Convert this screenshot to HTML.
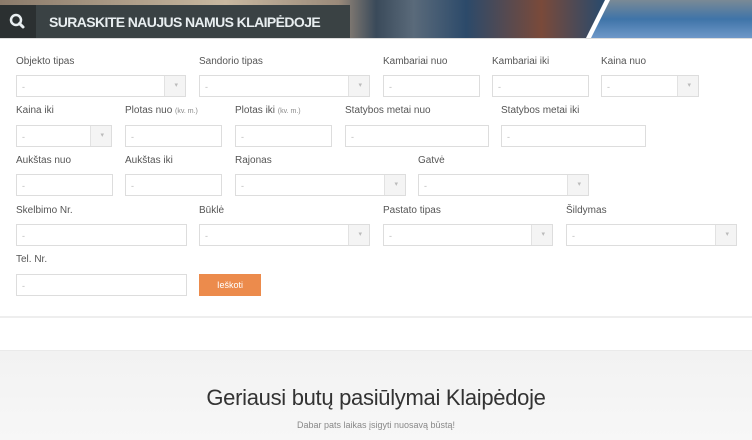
<!DOCTYPE html>
<html><head><meta charset="utf-8"><style>
*{margin:0;padding:0;box-sizing:border-box}
body{width:752px;height:440px;overflow:hidden;background:#fff;font-family:"Liberation Sans",sans-serif;position:relative}
.banner{position:absolute;left:0;top:0;width:752px;height:38px;background:linear-gradient(90deg,#8a7a6a 0%,#c8b8a0 30%,#9a8a7a 45%,#3a4a5a 50%,#5a6a7a 55%,#2c4a6a 62%,#7a4a3a 72%,#2c4a6a 80%)}
.water{position:absolute;left:0;top:0;width:752px;height:38px;background:linear-gradient(180deg,#7a8a95 0%,#3f74a8 50%,#6f98c8 100%);clip-path:polygon(609px 0,752px 0,752px 38px,589px 38px)}
.stripe{position:absolute;left:0;top:0;width:752px;height:38px;background:#fff;clip-path:polygon(605px 0,610px 0,591px 38px,586px 38px)}
.bar{position:absolute;left:0;top:5px;width:350px;height:33px;background:#3a4244}
.ico{position:absolute;left:0;top:5px;width:36px;height:33px;background:#2b3031}
.bar span{position:absolute;left:49px;top:9px;color:#e8eef0;font-weight:bold;font-size:14px;letter-spacing:-0.6px;white-space:nowrap}
.bl{position:absolute;left:0;top:38px;width:752px;height:1px;background:#ddd}
.l{position:absolute;font-size:10px;color:#555;white-space:nowrap}
.l small{font-size:7px;color:#888}
.i{position:absolute;height:22px;border:1px solid #ddd;background:#fff;font-size:9px;color:#bbb;padding:6px 0 0 5px}
.i.s::after{content:"";position:absolute;right:0;top:0;width:20px;height:20px;background:#f4f4f4;border-left:1px solid #e2e2e2}
.i.s::before{content:"▾";position:absolute;right:7px;top:5px;font-size:7px;color:#bbb;z-index:1}
.btn{position:absolute;left:199px;top:274px;width:62px;height:22px;background:#ec8b4c;color:#fff;font-size:9px;text-align:center;line-height:22px}
.hr{position:absolute;left:0;top:316px;width:752px;height:2px;background:#eee}
.gray{position:absolute;left:0;top:350px;width:752px;height:90px;background:linear-gradient(#f2f2f2,#f7f7f7);border-top:1px solid #eaeaea}
h2{position:absolute;left:0;width:752px;top:385px;text-align:center;font-size:22px;font-weight:normal;color:#333;letter-spacing:-0.3px}
.sub{position:absolute;left:0;width:752px;top:420px;text-align:center;font-size:9px;color:#888}
</style></head><body>
<div class="banner"></div><div class="water"></div><div class="stripe"></div>
<div class="bar"><span>SURASKITE NAUJUS NAMUS KLAIPĖDOJE</span></div>
<div class="ico"><svg width="36" height="33" viewBox="0 0 36 33"><circle cx="16" cy="15" r="5" fill="none" stroke="#e8eef0" stroke-width="2.5"/><line x1="19.5" y1="18.5" x2="23" y2="22" stroke="#e8eef0" stroke-width="3" stroke-linecap="round"/></svg></div>
<div class="bl"></div>

<div class="l" style="left:16px;top:56px">Objekto tipas</div>
<div class="l" style="left:199px;top:56px">Sandorio tipas</div>
<div class="l" style="left:383px;top:56px">Kambariai nuo</div>
<div class="l" style="left:492px;top:56px">Kambariai iki</div>
<div class="l" style="left:601px;top:56px">Kaina nuo</div>
<div class="i s" style="left:16px;top:75px;width:170px">-</div>
<div class="i s" style="left:199px;top:75px;width:171px">-</div>
<div class="i" style="left:383px;top:75px;width:97px">-</div>
<div class="i" style="left:492px;top:75px;width:97px">-</div>
<div class="i s" style="left:601px;top:75px;width:98px">-</div>

<div class="l" style="left:16px;top:105px">Kaina iki</div>
<div class="l" style="left:125px;top:105px">Plotas nuo <small>(kv. m.)</small></div>
<div class="l" style="left:235px;top:105px">Plotas iki <small>(kv. m.)</small></div>
<div class="l" style="left:345px;top:105px">Statybos metai nuo</div>
<div class="l" style="left:501px;top:105px">Statybos metai iki</div>
<div class="i s" style="left:16px;top:125px;width:96px">-</div>
<div class="i" style="left:125px;top:125px;width:97px">-</div>
<div class="i" style="left:235px;top:125px;width:97px">-</div>
<div class="i" style="left:345px;top:125px;width:144px">-</div>
<div class="i" style="left:501px;top:125px;width:145px">-</div>

<div class="l" style="left:16px;top:155px">Aukštas nuo</div>
<div class="l" style="left:125px;top:155px">Aukštas iki</div>
<div class="l" style="left:235px;top:155px">Rajonas</div>
<div class="l" style="left:418px;top:155px">Gatvė</div>
<div class="i" style="left:16px;top:174px;width:97px">-</div>
<div class="i" style="left:125px;top:174px;width:97px">-</div>
<div class="i s" style="left:235px;top:174px;width:171px">-</div>
<div class="i s" style="left:418px;top:174px;width:171px">-</div>

<div class="l" style="left:16px;top:205px">Skelbimo Nr.</div>
<div class="l" style="left:199px;top:205px">Būklė</div>
<div class="l" style="left:383px;top:205px">Pastato tipas</div>
<div class="l" style="left:566px;top:205px">Šildymas</div>
<div class="i" style="left:16px;top:224px;width:171px">-</div>
<div class="i s" style="left:199px;top:224px;width:171px">-</div>
<div class="i s" style="left:383px;top:224px;width:170px">-</div>
<div class="i s" style="left:566px;top:224px;width:171px">-</div>

<div class="l" style="left:16px;top:254px">Tel. Nr.</div>
<div class="i" style="left:16px;top:274px;width:171px">-</div>
<div class="btn">Ieškoti</div>

<div class="hr"></div>
<div class="gray"></div>
<h2>Geriausi butų pasiūlymai Klaipėdoje</h2>
<div class="sub">Dabar pats laikas įsigyti nuosavą būstą!</div>
</body></html>
